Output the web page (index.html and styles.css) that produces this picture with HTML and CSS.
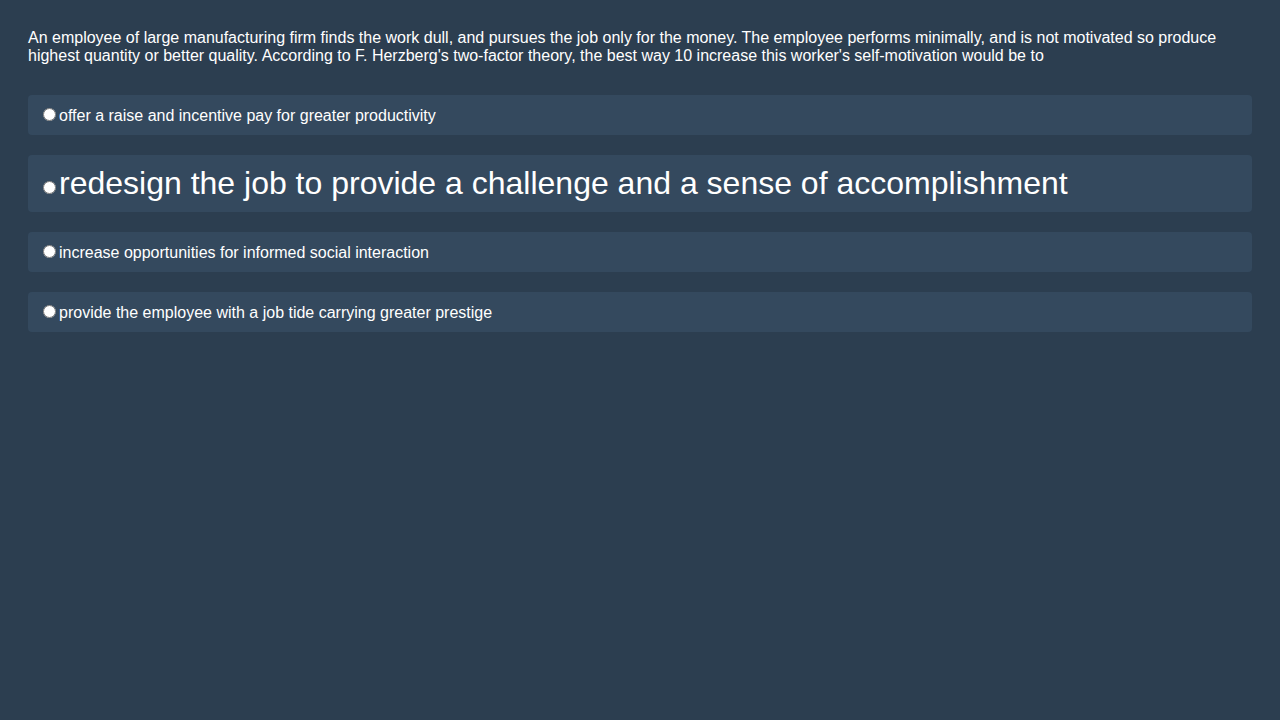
FILE: index.html
```html
<!DOCTYPE html>
<html>
<head>
<meta charset="utf-8">
<link rel="stylesheet" href="styles.css">
</head>
<body>
<div class="quiz">
  <p class="question">An employee of large manufacturing firm finds the work dull, and pursues the job only for the money. The employee performs minimally, and is not motivated so produce highest quantity or better quality. According to F. Herzberg's two-factor theory, the best way 10 increase this worker's self-motivation would be to</p>
  <label class="option"><input type="radio" name="q"><span>offer a raise and incentive pay for greater productivity</span></label>
  <label class="option big"><input type="radio" name="q"><span>redesign the job to provide a challenge and a sense of accomplishment</span></label>
  <label class="option"><input type="radio" name="q"><span>increase opportunities for informed social interaction</span></label>
  <label class="option"><input type="radio" name="q"><span>provide the employee with a job tide carrying greater prestige</span></label>
</div>
</body>
</html>
```
FILE: styles.css
```css
html, body {
  margin: 0;
  padding: 0;
  background: #2c3e50;
  height: 100%;
}
body {
  font-family: "Liberation Sans", Arial, sans-serif;
  font-size: 16px;
  color: #ffffff;
}
.quiz {
  padding: 29px 28px 28px;
}
.question {
  margin: 0 0 30px 0;
  line-height: 18px;
}
.option {
  display: block;
  background: #34495e;
  border-radius: 4px;
  padding: 10px;
  margin-bottom: 20px;
}
.option input {
  margin: 3px 3px 0 5px;
}
.option.big span {
  font-size: 32px;
}
```
